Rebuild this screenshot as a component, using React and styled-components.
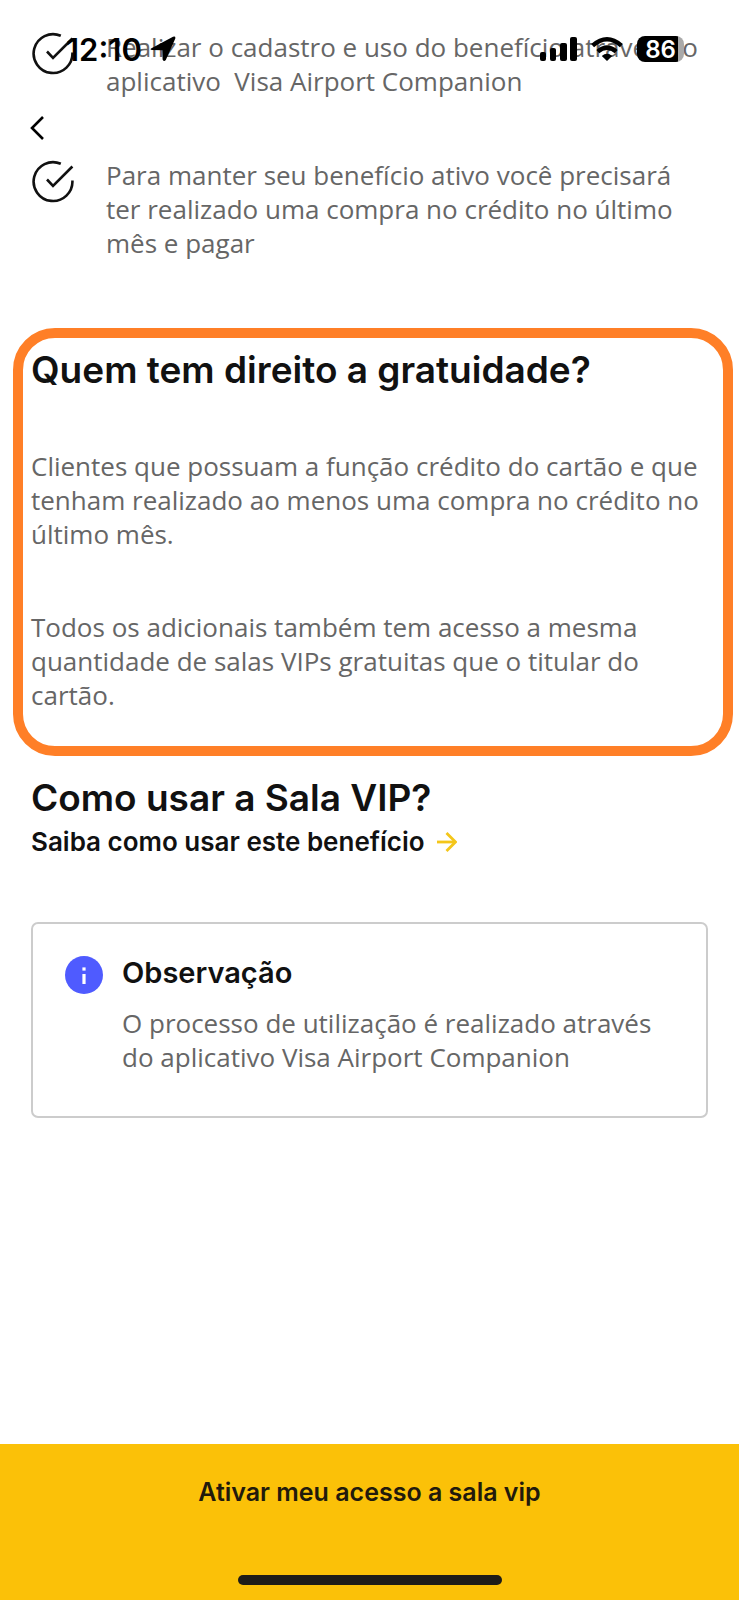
import React from 'react';
import styled, { createGlobalStyle } from 'styled-components';

const GlobalStyle = createGlobalStyle`
* {
    box-sizing: border-box;
}
body {
    margin: 0;
    background: #ffffff;
    font-family: Inter, "Liberation Sans", sans-serif;
}
h2, h3, p, ul {
    margin: 0;
    padding: 0;
    font-weight: 400;
}
`;

const Page = styled.div`
position: relative;
display: flex;
flex-direction: column;
min-height: 100vh;
`;

const TopBar = styled.header`
position: absolute;
top: 0;
left: 0;
right: 0;
padding: 30px 55px 0 66px;
`;

const StatusBar = styled.div`
display: flex;
justify-content: space-between;
align-items: center;
height: 38px;
`;

const StatusGroup = styled.div`
display: flex;
align-items: center;
gap: ${(props) => props.$gap}px;
`;

const Time = styled.time`
font-size: 31px;
font-weight: 600;
color: #000000;
`;

const Battery = styled.span`
display: flex;
align-items: center;
justify-content: center;
width: 47px;
height: 26px;
border-radius: 8px;
background: linear-gradient(to right, #000000 88%, #a9a9a9 88%);
font-size: 24px;
font-weight: 600;
color: #ffffff;
`;

const BackButton = styled.button`
display: block;
margin: 46px 0 0 -38px;
padding: 2px;
border: 0;
background: none;
cursor: pointer;
`;

const Content = styled.main`
padding-top: 30px;
`;

const Steps = styled.ul`
display: flex;
flex-direction: column;
gap: 60px;
padding: 0 31px;
list-style: none;
`;

const Step = styled.li`
display: flex;
align-items: flex-start;
gap: 32px;
svg {
    flex: none;
    margin-top: 2px;
}
`;

const Text = styled.p`
font-family: "Open Sans", "Liberation Sans", sans-serif;
font-size: 26px;
line-height: 34px;
color: #666666;
`;

const Title = styled.h2`
font-size: 37px;
line-height: 40px;
font-weight: 600;
color: #111111;
`;

const Highlight = styled.section`
display: flex;
flex-direction: column;
gap: 59px;
margin: 68px 6px 0 13px;
padding: 12px 8px 34px;
border: 10px solid #ff7f27;
border-radius: 42px;
`;

const Usage = styled.section`
display: flex;
flex-direction: column;
align-items: flex-start;
gap: 3px;
margin-top: 22px;
padding: 0 31px;
`;

const MoreLink = styled.a`
display: flex;
align-items: center;
gap: 12px;
font-size: 26px;
line-height: 42px;
font-weight: 600;
color: #111111;
text-decoration: none;
`;

const Note = styled.aside`
display: flex;
align-items: flex-start;
gap: 19px;
margin: 59px 31px 0;
padding: 32px;
border: 2px solid #cccccc;
border-radius: 7px;
svg {
    flex: none;
}
`;

const NoteBody = styled.div`
display: flex;
flex-direction: column;
gap: 16px;
padding-bottom: 10px;
`;

const NoteTitle = styled.h3`
font-size: 29px;
line-height: 34px;
font-weight: 600;
color: #111111;
`;

const Footer = styled.footer`
display: flex;
flex-direction: column;
align-items: center;
justify-content: space-between;
height: 156px;
margin-top: auto;
padding-bottom: 15px;
background: #fbc108;
`;

const ActionButton = styled.button`
width: 100%;
padding: 31px 0;
border: 0;
background: none;
font-family: inherit;
font-size: 25px;
line-height: 34px;
font-weight: 600;
color: #221a0c;
cursor: pointer;
`;

const HomeBar = styled.div`
width: 264px;
height: 10px;
border-radius: 5px;
background: #1e1c18;
`;

const CheckIcon = () => (
    <svg width="43" height="43" viewBox="0 0 43 43" fill="none" stroke="#111111" strokeWidth="2.6">
        <path d="M41.4 20.5A19.4 19.4 0 1 1 29.8 3.8" />
        <path d="M16 19.5L22 25.8L41.4 6.5" />
    </svg>
);

const LocationIcon = () => (
    <svg width="26" height="26" viewBox="0 0 26 26" fill="#000000">
        <path d="M1.5 12.2L23 .8Q26 -.2 25.2 2.8L15.8 24Q14 26.4 12.6 23.6L12.3 14.2L2.2 14Q-.8 13.6 1.5 12.2Z" />
    </svg>
);

const SignalIcon = () => (
    <svg width="37" height="24" viewBox="0 0 37 24" fill="#000000">
        <rect x="0" y="15" width="6" height="9" rx="2" />
        <rect x="10" y="11" width="6" height="13" rx="2" />
        <rect x="20" y="6" width="7" height="18" rx="2" />
        <rect x="30" y="0" width="7" height="24" rx="2" />
    </svg>
);

const WifiIcon = () => (
    <svg width="32" height="24" viewBox="0 0 32 24" fill="none" stroke="#000000" strokeWidth="4.4">
        <path d="M1.6 8.6Q16 -4 30.4 8.6" />
        <path d="M6.8 14.6Q16 6.6 25.2 14.6" />
        <path d="M10.8 19Q16 14.6 21.2 19L16 24Z" fill="#000000" stroke="none" />
    </svg>
);

const BackIcon = () => (
    <svg width="14" height="24" viewBox="0 0 14 24" fill="none" stroke="#000000" strokeWidth="2.6">
        <path d="M13 1L2 12L13 23" />
    </svg>
);

const ArrowIcon = () => (
    <svg width="20" height="20" viewBox="0 0 20 20" fill="none" stroke="#f4c61a" strokeWidth="2.8">
        <path d="M0 10H18" />
        <path d="M9.5 1L18.5 10L9.5 19" />
    </svg>
);

const InfoIcon = () => (
    <svg width="38" height="38" viewBox="0 0 38 38">
        <circle cx="19" cy="19" r="19" fill="#4f5bff" />
        <rect x="17.4" y="11.4" width="3.2" height="3.2" fill="#ffffff" />
        <rect x="17.4" y="18" width="3.2" height="10" fill="#ffffff" />
    </svg>
);

const App = () => {
    return (
        <Page>
            <GlobalStyle />
            <Content>
                <Steps>
                    <Step>
                        <CheckIcon />
                        <Text>Realizar o cadastro e uso do benefício através do<br />aplicativo&nbsp; Visa Airport Companion</Text>
                    </Step>
                    <Step>
                        <CheckIcon />
                        <Text>Para manter seu benefício ativo você precisará<br />ter realizado uma compra no crédito no último<br />mês e pagar</Text>
                    </Step>
                </Steps>
                <Highlight>
                    <Title>Quem tem direito a gratuidade?</Title>
                    <Text>Clientes que possuam a função crédito do cartão e que<br />tenham realizado ao menos uma compra no crédito no<br />último mês.</Text>
                    <Text>Todos os adicionais também tem acesso a mesma<br />quantidade de salas VIPs gratuitas que o titular do<br />cartão.</Text>
                </Highlight>
                <Usage>
                    <Title>Como usar a Sala VIP?</Title>
                    <MoreLink href="#como-usar">
                        Saiba como usar este benefício
                        <ArrowIcon />
                    </MoreLink>
                </Usage>
                <Note>
                    <InfoIcon />
                    <NoteBody>
                        <NoteTitle>Observação</NoteTitle>
                        <Text>O processo de utilização é realizado através<br />do aplicativo Visa Airport Companion</Text>
                    </NoteBody>
                </Note>
            </Content>
            <Footer>
                <ActionButton type="button">Ativar meu acesso a sala vip</ActionButton>
                <HomeBar />
            </Footer>
            <TopBar>
                <StatusBar>
                    <StatusGroup $gap={8}>
                        <Time>12:10</Time>
                        <LocationIcon />
                    </StatusGroup>
                    <StatusGroup $gap={14}>
                        <SignalIcon />
                        <WifiIcon />
                        <Battery>86</Battery>
                    </StatusGroup>
                </StatusBar>
                <BackButton type="button" aria-label="Voltar">
                    <BackIcon />
                </BackButton>
            </TopBar>
        </Page>
    )
}

export default App;
